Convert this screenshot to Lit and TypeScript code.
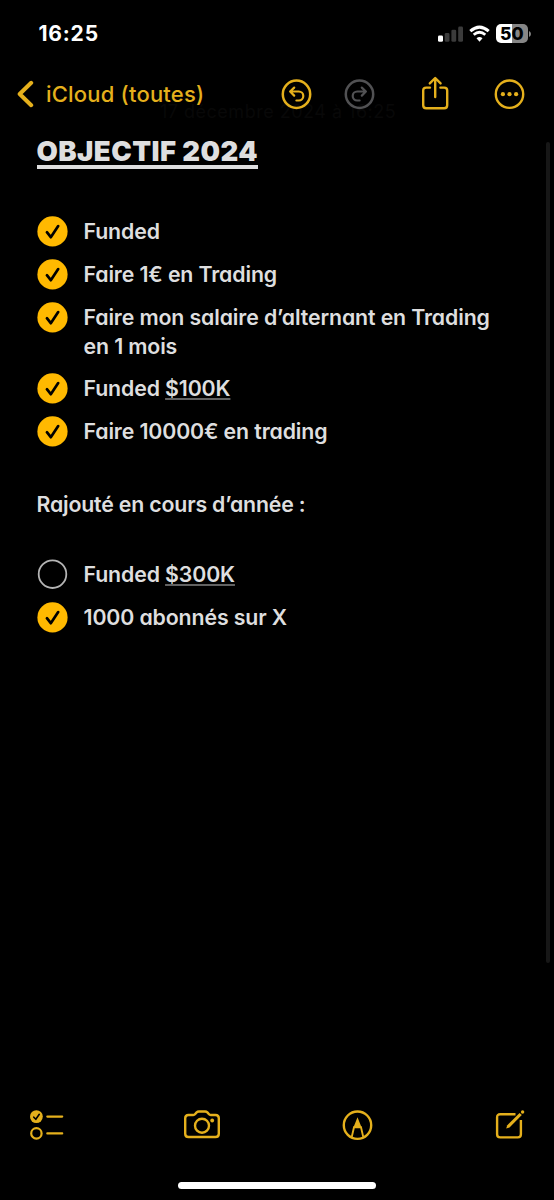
import { LitElement, html, css, svg } from "lit";
import { customElement, property } from "lit/decorators.js";

@customElement("check-item")
class CheckItem extends LitElement {
  @property({ type: Boolean }) done = false;

  static styles = css`
    :host { display: flex; align-items: flex-start; gap: 16px; }
    .mark { width: 31px; height: 31px; flex: none; display: block; }
    .label { line-height: 29px; padding-top: 1px; }
  `;

  render() {
    return html`
      <svg class="mark" viewBox="0 0 31 31">
        ${this.done
          ? svg`<circle cx="15.5" cy="15.4" r="15.1" fill="#ffb900"/>
              <path d="M9.9 16.2L13.8 21.2L21.2 10.1" fill="none" stroke="#000" stroke-width="2.7" stroke-linecap="round" stroke-linejoin="round"/>`
          : svg`<circle cx="15.5" cy="15.2" r="13.8" fill="none" stroke="#b4b4b4" stroke-width="1.8"/>`}
      </svg>
      <div class="label"><slot></slot></div>
    `;
  }
}

@customElement("app-root")
class AppRoot extends LitElement {
  static styles = css`
    :host {
      display: flex; flex-direction: column; position: relative;
      width: 554px; height: 1200px; overflow: hidden; box-sizing: border-box;
      background: #000; color: #dededf;
      font-family: Inter, "Liberation Sans", sans-serif;
    }
    svg { display: block; flex: none; }
    .status { height: 66px; display: flex; align-items: center; justify-content: space-between; padding: 1px 23px 0 38.5px; box-sizing: border-box; }
    .time { color: #fff; font-size: 21px; font-weight: 730; letter-spacing: 0.8px; line-height: 26px; }
    .indicators { display: flex; align-items: center; gap: 5.5px; }
    .battery { display: flex; align-items: center; gap: 1px; }
    .cell { width: 32.5px; height: 18.5px; border-radius: 5px; background: linear-gradient(90deg, #fff 50%, #868686 50%); color: #000; font-size: 17.5px; line-height: 20px; font-weight: 800; text-align: center; }
    .nav { position: relative; height: 56px; display: flex; align-items: center; padding-left: 16px; color: #e5b01c; box-sizing: border-box; }
    .back { display: flex; align-items: center; gap: 11px; width: 265px; font-size: 22px; line-height: 28px; letter-spacing: 0.2px; font-weight: 500; }
    .actions { display: flex; align-items: center; }
    .redo { margin-left: 31.5px; color: #515153; }
    .share { margin-left: 45px; }
    .more { margin-left: 44px; }
    .date { position: absolute; top: 101px; left: 160px; width: 238px; color: #080808; font-size: 18px; line-height: 22px; white-space: nowrap; letter-spacing: 0.5px; }
    .note { flex: 1; padding: 13px 36px 0 36.5px; font-size: 21.3px; font-weight: 580; letter-spacing: -0.12px; font-feature-settings: "cv11" 1; }
    .title { width: max-content; margin: 0; font-size: 27.5px; line-height: 32px; font-weight: 900; letter-spacing: 0.43px; border-bottom: 4px solid #dededf; height: 30px; }
    .list { display: flex; flex-direction: column; gap: 12px; }
    .first { margin-top: 47px; }
    .second { margin-top: 40px; }
    .added { margin-top: 42px; line-height: 30px; letter-spacing: -0.18px; }
    .amount { text-decoration: underline 1.5px #626262; text-underline-offset: 1.5px; text-decoration-skip-ink: none; }
    .tools { height: 60px; display: flex; align-items: center; justify-content: space-between; padding: 0 29px; color: #e5b01c; box-sizing: border-box; }
    .camera { margin-left: -3px; }
    .pen { margin-left: -1px; }
    .home { width: 198px; height: 7px; border-radius: 4px; background: #fff; margin: 27px auto 11px; }
    .scroll { position: absolute; left: 546px; top: 142px; width: 4px; height: 821px; border-radius: 2px; background: #171717; }
  `;

  render() {
    return html`
      <div class="status">
        <div class="time">16:25</div>
        <div class="indicators">
          <svg width="26" height="18" viewBox="0 0 26 18">
            <rect x="0" y="10.5" width="5" height="6.3" rx="1.4" fill="#fff"/>
            <rect x="6.7" y="8" width="4.8" height="8.8" rx="1.4" fill="#3b3b3b"/>
            <rect x="13.4" y="4.7" width="4.8" height="12.1" rx="1.4" fill="#3b3b3b"/>
            <rect x="20.2" y="1.5" width="4.8" height="15.3" rx="1.4" fill="#3b3b3b"/>
          </svg>
          <svg width="21" height="18" viewBox="0 0 21 18" fill="none" stroke="#fff">
            <path d="M1.3 6.2Q10.5 -2 19.7 6.2" stroke-width="3"/>
            <path d="M4.7 9.8Q10.5 4.7 16.3 9.8" stroke-width="2.8"/>
            <path d="M10.5 16.7L7.5 13.3Q10.5 10.8 13.5 13.3Z" fill="#fff" stroke="none"/>
          </svg>
          <div class="battery">
            <div class="cell">50</div>
            <svg width="2" height="6" viewBox="0 0 2 6"><path d="M0 0Q2 1 2 3T0 6Z" fill="#868686"/></svg>
          </div>
        </div>
      </div>

      <div class="date">17 décembre 2024 à 16:25</div>
      <div class="nav">
        <div class="back">
          <svg width="19" height="28" viewBox="0 0 19 28"><path d="M15.2 2.8L3.7 14L15.2 25.2" fill="none" stroke="currentColor" stroke-width="4" stroke-linecap="round" stroke-linejoin="round"/></svg>
          <span>iCloud (toutes)</span>
        </div>
        <div class="actions">
          <svg width="31" height="31" viewBox="0 0 31 31" fill="none" stroke="currentColor" stroke-width="2.2" stroke-linecap="round" stroke-linejoin="round">
            <circle cx="15.5" cy="15.2" r="13.7" stroke-width="2.5"/>
            <path d="M13.2 8.6L9.1 12.5L13.2 16.6M9.4 12.5H17.8A4.5 4.5 0 0 1 17.8 21.5H15.4"/>
          </svg>
          <svg class="redo" width="31" height="31" viewBox="0 0 31 31" fill="none" stroke="currentColor" stroke-width="2.2" stroke-linecap="round" stroke-linejoin="round">
            <circle cx="15.5" cy="15.2" r="13.7" stroke-width="2.5"/>
            <path d="M17.8 8.6L21.9 12.5L17.8 16.6M21.6 12.5H13.2A4.5 4.5 0 0 0 13.2 21.5H15.6"/>
          </svg>
          <svg class="share" width="30" height="36" viewBox="0 0 30 36" fill="none" stroke="currentColor" stroke-width="2.4" stroke-linecap="round" stroke-linejoin="round">
            <path d="M10 11.6H6.2Q3.2 11.6 3.2 14.6V29.2Q3.2 32.2 6.2 32.2H24.2Q27.2 32.2 27.2 29.2V14.6Q27.2 11.6 24.2 11.6H20.4M15.2 21V2.6M9.8 7.4L15.2 2L20.6 7.4"/>
          </svg>
          <svg class="more" width="31" height="31" viewBox="0 0 31 31">
            <circle cx="15.5" cy="15.2" r="13.7" fill="none" stroke="currentColor" stroke-width="2.4"/>
            <g fill="currentColor"><circle cx="8.9" cy="15.2" r="2.1"/><circle cx="15.5" cy="15.2" r="2.1"/><circle cx="22.1" cy="15.2" r="2.1"/></g>
          </svg>
        </div>
      </div>

      <div class="note">
        <h1 class="title">OBJECTIF 2024</h1>
        <div class="list first">
          <check-item done>Funded</check-item>
          <check-item done>Faire 1€ en Trading</check-item>
          <check-item done>Faire mon salaire d’alternant en Trading<br>en 1 mois</check-item>
          <check-item done>Funded <span class="amount">$100K</span></check-item>
          <check-item done>Faire 10000€ en trading</check-item>
        </div>
        <div class="added">Rajouté en cours d’année :</div>
        <div class="list second">
          <check-item>Funded <span class="amount">$300K</span></check-item>
          <check-item done>1000 abonnés sur X</check-item>
        </div>
      </div>

      <div class="tools">
        <svg width="36" height="32" viewBox="0 0 36 32" fill="none" stroke="currentColor" stroke-width="2.2" stroke-linecap="round" stroke-linejoin="round">
          <circle cx="7.4" cy="7.6" r="6.4" fill="currentColor" stroke="none"/>
          <path d="M4.8 8.2L6.8 10.3L10.3 5.3" stroke="#000" stroke-width="1.6"/>
          <circle cx="7.4" cy="24.4" r="5.2"/>
          <path d="M18.3 7.6H33.2M18.3 24.4H33.2"/>
        </svg>
        <svg class="camera" width="36" height="30" viewBox="0 0 36 30" fill="none" stroke="currentColor" stroke-width="2.4" stroke-linejoin="round">
          <path d="M1.2 8.3Q1.2 5 4.5 5H9.2Q10.4 5 11.2 4L12.6 2.4Q13.6 1.5 14.8 1.5H21.2Q22.4 1.5 23.4 2.4L24.8 4Q25.6 5 26.8 5H31.5Q34.8 5 34.8 8.3V23.7Q34.8 27 31.5 27H4.5Q1.2 27 1.2 23.7Z"/>
          <circle cx="18" cy="15.7" r="7"/><circle cx="28.2" cy="10.5" r="1.9" fill="currentColor" stroke="none"/>
        </svg>
        <svg class="pen" width="31" height="31" viewBox="0 0 31 31" fill="none" stroke="currentColor" stroke-width="2.4">
          <circle cx="15.5" cy="15.2" r="13.7"/>
          <path d="M9.6 27.6L12 17.2H19L21.4 27.6" stroke-width="1.9"/>
          <path d="M15.5 7.3L19.8 18H11.2Z" fill="currentColor" stroke="none"/>
        </svg>
        <svg width="30" height="32" viewBox="0 0 30 32" fill="none" stroke="currentColor" stroke-width="2.4" stroke-linejoin="round">
          <path d="M20.5 5.2H5.2Q2.1 5.2 2.1 8.3V25.3Q2.1 28.4 5.2 28.4H22.8Q25.9 28.4 25.9 25.3V11"/>
          <path d="M11.2 19.5L12.3 16.2L24.6 3.9L26.8 6.1L14.5 18.4Z" fill="currentColor" stroke="none"/>
          <circle cx="27.6" cy="3" r="1.7" fill="currentColor" stroke="none"/>
        </svg>
      </div>
      <div class="home"></div>
      <div class="scroll"></div>
    `;
  }
}
